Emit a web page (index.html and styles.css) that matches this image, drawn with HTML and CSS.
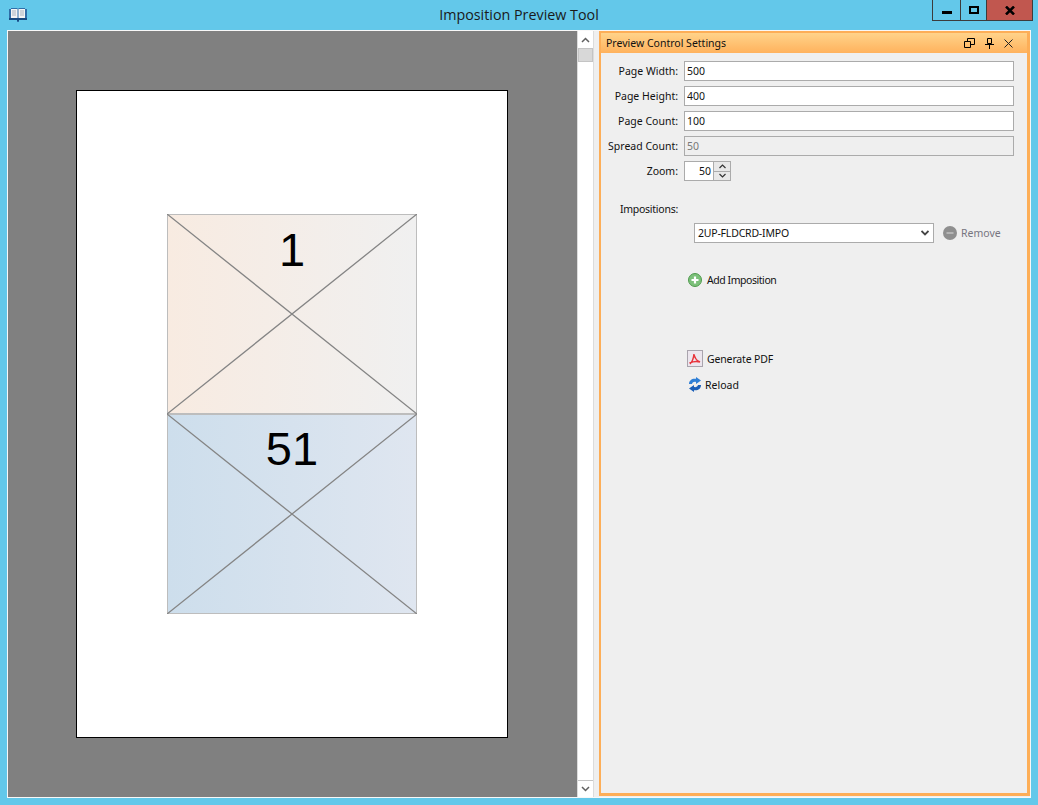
FILE: index.html
```html
<!DOCTYPE html>
<html>
    <head>
        <meta charset="utf-8">
        <title>Imposition Preview Tool</title>
        <link rel="stylesheet" href="styles.css">
    </head>
    <body>
        <div class="titlebar">
            <svg class="appicon" width="18" height="14" viewBox="0 0 18 14">
                <path d="M0 1h2V0h6l1 1 1-1h6v1h2v11H10v2H8v-2H0z" fill="#2f6ea8"/>
                <path d="M0 10h18v2H10v1H8v-1H0z" fill="#174a80"/>
                <path d="M2 1h6.500v9H2zM9.500 1H16v9H9.500z" fill="#f4f4f4"/>
                <path d="M3 3h4M3 5h4M3 7h4M11 3h4M11 5h4M11 7h4" stroke="#a9b4bf"/>
            </svg>
            <div class="title">Imposition Preview Tool</div>
            <div class="winbtns">
                <div class="winbtn">
                    <svg class="min-icon" width="10" height="3" viewBox="0 0 10 3"><rect width="10" height="3" fill="#000"/></svg>
                </div>
                <div class="winbtn">
                    <svg width="10" height="8" viewBox="0 0 10 8"><path d="M0 0h10v8H0zM2 2v4h6V2z" fill="#000" fill-rule="evenodd"/></svg>
                </div>
                <div class="winbtn close">
                    <svg width="10" height="9" viewBox="0 0 10 9"><path d="M1 0.500l8 8M9 0.500l-8 8" stroke="#000" stroke-width="2.500"/></svg>
                </div>
            </div>
        </div>
        <div class="main">
            <div class="split">
                <div class="scrollpane">
                    <div class="canvas">
                        <div class="page">
                            <div class="tile tile-top">
                                <svg class="cross" viewBox="0 0 250 200" preserveAspectRatio="none"><path d="M0 0L250 200M250 0L0 200" stroke="#858585" stroke-width="1.300" fill="none"/></svg>
                                <span class="tilenum">1</span>
                            </div>
                            <div class="tile tile-bottom">
                                <svg class="cross" viewBox="0 0 250 200" preserveAspectRatio="none"><path d="M0 0L250 200M250 0L0 200" stroke="#858585" stroke-width="1.300" fill="none"/></svg>
                                <span class="tilenum">51</span>
                            </div>
                        </div>
                    </div>
                    <div class="scrollbar">
                        <div class="sb-btn">
                            <svg width="9" height="6" viewBox="0 0 9 6"><path d="M1 5l3.500-3.500L8 5" stroke="#606060" stroke-width="1.500" fill="none"/></svg>
                        </div>
                        <div class="sb-thumb"></div>
                        <div class="sb-track"></div>
                        <div class="sb-btn sb-down">
                            <svg width="9" height="6" viewBox="0 0 9 6"><path d="M1 1l3.500 3.500L8 1" stroke="#606060" stroke-width="1.500" fill="none"/></svg>
                        </div>
                    </div>
                </div>
                <div class="panel">
                    <div class="panel-head">
                        <span>Preview Control Settings</span>
                        <div class="panel-icons">
                            <svg width="11" height="10" viewBox="0 0 11 10"><path d="M0.500 3.500h6v6h-6zM3.500 3V0.500h7v6H7" stroke="#000" fill="none"/></svg>
                            <svg width="9" height="11" viewBox="0 0 9 11"><path d="M2.500 0.500h4v5h-4zM0 6.500h9M4.500 6.500V11" stroke="#000" fill="none"/></svg>
                            <svg width="9" height="9" viewBox="0 0 9 9"><path d="M0.500 0.500l8 8M8.500 0.500l-8 8" stroke="#222" fill="none"/></svg>
                        </div>
                    </div>
                    <div class="panel-body">
                        <div class="form">
                            <label>Page Width:</label>
                            <input class="field" type="text" value="500">
                            <label>Page Height:</label>
                            <input class="field" type="text" value="400">
                            <label>Page Count:</label>
                            <input class="field" type="text" value="100">
                            <label>Spread Count:</label>
                            <input class="field" type="text" value="50" disabled>
                            <label>Zoom:</label>
                            <div class="spinner">
                                <div class="spin-value">50</div>
                                <div class="spin-btns">
                                    <div class="spin-btn"><svg width="7" height="5" viewBox="0 0 7 5"><path d="M0.500 4L3.500 1l3 3" stroke="#333" stroke-width="1.200" fill="none"/></svg></div>
                                    <div class="spin-btn"><svg width="7" height="5" viewBox="0 0 7 5"><path d="M0.500 1l3 3 3-3" stroke="#333" stroke-width="1.200" fill="none"/></svg></div>
                                </div>
                            </div>
                        </div>
                        <div class="impo-label">Impositions:</div>
                        <div class="impo-row">
                            <div class="select">
                                <span>2UP-FLDCRD-IMPO</span>
                                <svg width="8" height="6" viewBox="0 0 8 6"><path d="M0.500 1L4 4.500 7.500 1" stroke="#444" stroke-width="1.800" fill="none"/></svg>
                            </div>
                            <div class="action disabled">
                                <svg width="14" height="14" viewBox="0 0 14 14"><circle cx="7" cy="7" r="7" fill="#8f8f8f"/><rect x="3.500" y="6" width="7" height="2" fill="#b5b5b5"/></svg>
                                <span>Remove</span>
                            </div>
                        </div>
                        <div class="action add">
                            <svg width="14" height="14" viewBox="0 0 14 14"><circle cx="7" cy="7" r="6.500" fill="#7cc07a" stroke="#4f9a4d"/><path d="M7 3.500v7M3.500 7h7" stroke="#fff" stroke-width="2.200"/></svg>
                            <span>Add Imposition</span>
                        </div>
                        <div class="action pdf">
                            <svg width="16" height="17" viewBox="0 0 16 17"><rect x="0.500" y="0.500" width="15" height="16" fill="#ece6ee" stroke="#a9a4ad"/><path d="M3 14c2-2 3.500-5 4-10 .5 3.500 2.500 6.500 6 8-3.500-1-7-.5-10.500 1" fill="none" stroke="#e8343c" stroke-width="1.500"/></svg>
                            <span>Generate PDF</span>
                        </div>
                        <div class="action reload">
                            <svg width="14" height="15" viewBox="0 0 14 15"><path d="M1 7C1 3 4.500 1 8 1.800V0l5 3.500L8 7V5C6 4.500 4.500 5.300 4 7z" fill="#2f7fd6"/><path d="M13 8c0 4-3.500 6-7 5.200V15L1 11.500 6 8v2c2 .5 3.500-.3 4-2z" fill="#1b5fb8"/></svg>
                            <span>Reload</span>
                        </div>
                    </div>
                </div>
            </div>
        </div>
    </body>
</html>
```

FILE: styles.css
```css
* {
    box-sizing: border-box;
}
html, body {
    margin: 0;
    height: 100%;
}
body {
    display: flex;
    flex-direction: column;
    background-color: #63c8ea;
    font: 10.5px "Noto Sans", sans-serif;
    color: #111;
    overflow: hidden;
}

/* window title */
.titlebar {
    position: relative;
    height: 30px;
    flex: none;
}
.appicon {
    position: absolute;
    left: 9px;
    top: 8px;
}
.title {
    padding-top: 5px;
    text-align: center;
    font: 14.3px "Open Sans", sans-serif;
    color: #1a1a1a;
}
.winbtns {
    position: absolute;
    right: 5px;
    top: 0;
    display: flex;
    height: 21px;
    border: 1px solid #3c3c3c;
    border-top: 0;
}
.winbtn {
    width: 28px;
    display: flex;
    align-items: center;
    justify-content: center;
    border-right: 1px solid #3c3c3c;
}
.winbtn:nth-child(2) {
    width: 26px;
}
.winbtn.close {
    width: 45px;
    border-right: 0;
    background-color: #c1574f;
}
.min-icon {
    margin-top: 5px;
}

.main {
    flex: 1;
    display: flex;
    min-height: 0;
    padding: 0 7px 7px;
}
.split {
    flex: 1;
    display: flex;
    gap: 5px;
    border: 1px solid #f8f8f8;
    background-color: #efefef;
}

/* left side */
.scrollpane {
    width: 586px;
    flex: none;
    display: flex;
    background-color: #808080;
}
.canvas {
    flex: 1;
    padding: 59px 0 0 68px;
}
.page {
    width: 432px;
    height: 648px;
    padding-top: 123px;
    background-color: #fff;
    border: 1px solid #000;
}
.tile {
    position: relative;
    width: 250px;
    height: 200px;
    margin-left: 90px;
    border: 1px solid #bdbdbd;
    text-align: center;
}
.tile-top {
    background: linear-gradient(90deg, #f8ebe1, #f0f0f0);
}
.tile-bottom {
    background: linear-gradient(90deg, #cddeec, #dfe6f0);
}
.cross {
    position: absolute;
    left: -1px;
    top: -1px;
    width: 250px;
    height: 200px;
}
.tilenum {
    position: relative;
    display: block;
    padding-top: 2px;
    font: 47px/66px "Liberation Sans", sans-serif;
    color: #000;
}
.tile-bottom .tilenum {
    padding-top: 1px;
}

.scrollbar {
    width: 17px;
    flex: none;
    display: flex;
    flex-direction: column;
    background-color: #fff;
    border-left: 1px solid #dcdcdc;
    border-right: 1px solid #dcdcdc;
}
.sb-btn {
    height: 17px;
    flex: none;
    display: flex;
    align-items: center;
    justify-content: center;
}
.sb-thumb {
    height: 14px;
    flex: none;
    background-color: #d8d8d8;
    border: 1px solid #c4c4c4;
}
.sb-track {
    flex: 1;
}
.sb-down {
    border-top: 1px solid #c4c4c4;
}

/* right side */
.panel {
    flex: 1;
    display: flex;
    flex-direction: column;
    margin-bottom: 1px;
    border: solid #fdae57;
    border-width: 2px 3px 3px 2px;
    background-color: #efefef;
}
.panel-head {
    height: 20px;
    flex: none;
    display: flex;
    align-items: center;
    justify-content: space-between;
    padding: 0 14px 0 5px;
    background: linear-gradient(#ffd38a, #ffb25d);
}
.panel-icons {
    display: flex;
    align-items: center;
    gap: 10px;
}
.panel-body {
    padding: 8px 13px 0 5px;
}
.form {
    display: grid;
    grid-template-columns: 72px 1fr;
    column-gap: 6px;
    row-gap: 5px;
    align-items: center;
}
.form label {
    text-align: right;
    white-space: nowrap;
}
.field {
    width: 100%;
    height: 20px;
    padding: 0 2px;
    border: 1px solid #ababab;
    background-color: #fff;
    font: 10.5px "Noto Sans", sans-serif;
    color: #111;
}
.field:disabled {
    background-color: #efefef;
    color: #777;
}
.spinner {
    width: 47px;
    height: 20px;
    display: flex;
    border: 1px solid #ababab;
    background-color: #fff;
}
.spin-value {
    flex: 1;
    padding-right: 2px;
    text-align: right;
    line-height: 18px;
}
.spin-btns {
    width: 17px;
    display: flex;
    flex-direction: column;
    gap: 1px;
    background-color: #ababab;
    border-left: 1px solid #ababab;
}
.spin-btn {
    flex: 1;
    display: flex;
    align-items: center;
    justify-content: center;
    background-color: #e8e8e8;
}
.impo-label {
    width: 72px;
    margin-top: 20px;
    text-align: right;
    line-height: 16px;
    letter-spacing: -0.25px;
}
.impo-row {
    display: flex;
    align-items: center;
    margin: 6px 0 0 88px;
}
.select {
    width: 240px;
    height: 20px;
    display: flex;
    align-items: center;
    justify-content: space-between;
    padding: 0 4px 0 3px;
    border: 1px solid #ababab;
    background-color: #fff;
    letter-spacing: -0.2px;
}
.action {
    display: flex;
    align-items: center;
    gap: 5px;
}
.action.disabled {
    margin-left: 9px;
    gap: 4px;
    color: #77757f;
}
.add {
    margin: 30px 0 0 82px;
    letter-spacing: -0.45px;
}
.pdf {
    margin: 63px 0 0 81px;
    gap: 4px;
    letter-spacing: -0.15px;
}
.reload {
    margin: 10px 0 0 82px;
    gap: 3px;
}
```
